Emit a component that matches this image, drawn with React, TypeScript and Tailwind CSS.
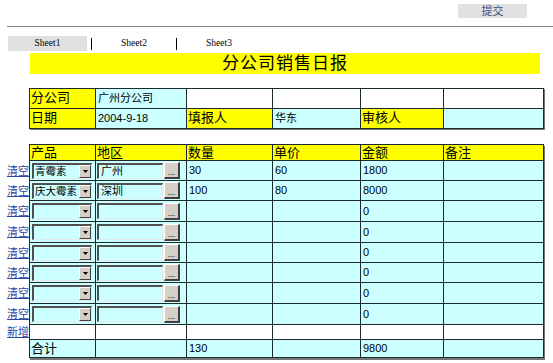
import React from 'react';

const cols = 'grid-cols-[66px_91px_86px_88px_83px_100px]';
const line = 'border-r border-b border-[#1b2b2b]';
const cjk = "font-['Liberation_Sans','Noto_Sans_CJK_SC',sans-serif]";

type Row = {
  product: string;
  region: string;
  qty: string;
  price: string;
  amount: string;
  h: string;
};

const rows: Row[] = [
  { product: '青霉素', region: '广州', qty: '30', price: '60', amount: '1800', h: 'h-[20px]' },
  { product: '庆大霉素', region: '深圳', qty: '100', price: '80', amount: '8000', h: 'h-[20px]' },
  { product: '', region: '', qty: '', price: '', amount: '0', h: 'h-[21px]' },
  { product: '', region: '', qty: '', price: '', amount: '0', h: 'h-[21px]' },
  { product: '', region: '', qty: '', price: '', amount: '0', h: 'h-[20px]' },
  { product: '', region: '', qty: '', price: '', amount: '0', h: 'h-[20px]' },
  { product: '', region: '', qty: '', price: '', amount: '0', h: 'h-[21px]' },
  { product: '', region: '', qty: '', price: '', amount: '0', h: 'h-[21px]' },
];

function Label({ text }: { text: string }) {
  return <div className={`${line} bg-[#ffff00] pl-px text-[13px] leading-[18px] text-black`}>{text}</div>;
}

function Cell({ text = '', white = false }: { text?: string; white?: boolean }) {
  return (
    <div className={`${line} ${white ? 'bg-white' : 'bg-[#ccffff]'} flex items-center pl-[2px] text-[11px] text-black`}>
      {text}
    </div>
  );
}

function Combo({ value }: { value: string }) {
  return (
    <div className="ml-[2px] flex h-[16px] w-[60px] border-t-2 border-l-2 border-t-[#505050] border-l-[#505050] border-b border-r border-b-[#e8e8e8] border-r-[#e8e8e8] bg-[#ccffff]">
      <div className="flex-1 pl-px text-[10.5px] leading-[13px] text-black whitespace-nowrap overflow-hidden">{value}</div>
      <div className="flex h-full w-[12px] items-center justify-center border-t border-l border-t-white border-l-white border-b border-r border-b-[#404040] border-r-[#404040] bg-[#d4d0c8]">
        <svg width="5" height="3" viewBox="0 0 5 3">
          <polygon points="0,0 5,0 2.5,3" fill="#000" />
        </svg>
      </div>
    </div>
  );
}

function Picker({ value }: { value: string }) {
  return (
    <div className="ml-px flex items-center gap-px">
      <div className="h-[16px] w-[66px] border-t-2 border-l-2 border-t-[#505050] border-l-[#505050] border-b border-r border-b-[#e8e8e8] border-r-[#e8e8e8] bg-[#ccffff] pl-[2px] text-[11px] leading-[13px] text-black">
        {value}
      </div>
      <div className="flex h-[17px] w-[16px] items-end justify-center border-t border-l border-t-white border-l-white border-b-2 border-r-2 border-b-[#404040] border-r-[#404040] bg-[#d4d0c8] text-[9px] leading-[9px] text-black">
        ...
      </div>
    </div>
  );
}

function Side({ text, h }: { text?: string; h: string }) {
  return (
    <div className={`${h} flex w-[29px] items-center pl-[7px] text-[11px] leading-none`}>
      {text && <span className="text-[#2b47a8] underline">{text}</span>}
    </div>
  );
}

export default function App() {
  return (
    <div className={`relative h-[363px] w-[553px] overflow-hidden bg-white ${cjk}`}>
      <div className="flex justify-end pt-1 pr-[26px]">
        <div className="flex h-[14px] w-[69px] items-center justify-center bg-[#e1e1e1] text-[11px] text-[#3d4f7c]">提交</div>
      </div>
      <div className="mt-2 ml-[7px] border-t border-[#8a8a8a]" />

      <div className="mt-[9px] ml-[8px] flex h-[15px] items-center font-['Liberation_Serif',serif] text-[9.5px] text-black">
        <div className="flex h-[15px] w-[79px] items-center justify-center bg-[#e0e0e0]">Sheet1</div>
        <div className="ml-[4px] h-[12px] w-px bg-black" />
        <div className="flex w-[84px] items-center justify-center">Sheet2</div>
        <div className="h-[12px] w-px bg-black" />
        <div className="flex w-[84px] items-center justify-center">Sheet3</div>
      </div>

      <div className="mt-[2px] ml-[30px] flex h-[21px] w-[510px] items-center justify-center bg-[#ffff00] text-[17px] tracking-[1px] text-black">
        分公司销售日报
      </div>

      <div className="mt-[14px] flex">
        <div className="w-[29px]" />
        <div className={`grid ${cols} w-[515px] border-t border-l border-[#1b2b2b] shadow-[1px_1px_0_#777] auto-rows-[20px]`}>
          <Label text="分公司" />
          <Cell text="广州分公司" />
          <Cell white />
          <Cell white />
          <Cell white />
          <Cell white />
          <Label text="日期" />
          <Cell text="2004-9-18" />
          <Label text="填报人" />
          <Cell text="华东" />
          <Label text="审核人" />
          <Cell />
        </div>
      </div>

      <div className="mt-[15px] flex">
        <div className="flex flex-col pt-px">
          <Side h="h-[16px]" />
          {rows.map((r, i) => (
            <Side key={i} text="清空" h={r.h} />
          ))}
          <Side text="新增" h="h-[15px]" />
          <Side h="h-[18px]" />
        </div>
        <div className="w-[515px] border-t border-l border-[#1b2b2b] shadow-[1px_2px_0_#777]">
          <div className={`grid ${cols} h-[16px]`}>
            {['产品', '地区', '数量', '单价', '金额', '备注'].map((t) => (
              <div key={t} className={`${line} bg-[#ffff00] pl-px text-[13px] leading-[15px] text-black`}>{t}</div>
            ))}
          </div>
          {rows.map((r, i) => (
            <div key={i} className={`grid ${cols} ${r.h}`}>
              <div className={`${line} flex items-center bg-[#ccffff]`}>
                <Combo value={r.product} />
              </div>
              <div className={`${line} flex items-center bg-[#ccffff]`}>
                <Picker value={r.region} />
              </div>
              <Cell text={r.qty} />
              <Cell text={r.price} />
              <Cell text={r.amount} />
              <Cell />
            </div>
          ))}
          <div className={`grid ${cols} h-[15px]`}>
            {[0, 1, 2, 3, 4, 5].map((k) => (
              <Cell key={k} white />
            ))}
          </div>
          <div className={`grid ${cols} h-[18px]`}>
            <div className={`${line} bg-[#ccffff] pl-px text-[13px] leading-[17px] text-black`}>合计</div>
            <Cell />
            <Cell text="130" />
            <Cell />
            <Cell text="9800" />
            <Cell />
          </div>
        </div>
      </div>
    </div>
  );
}
